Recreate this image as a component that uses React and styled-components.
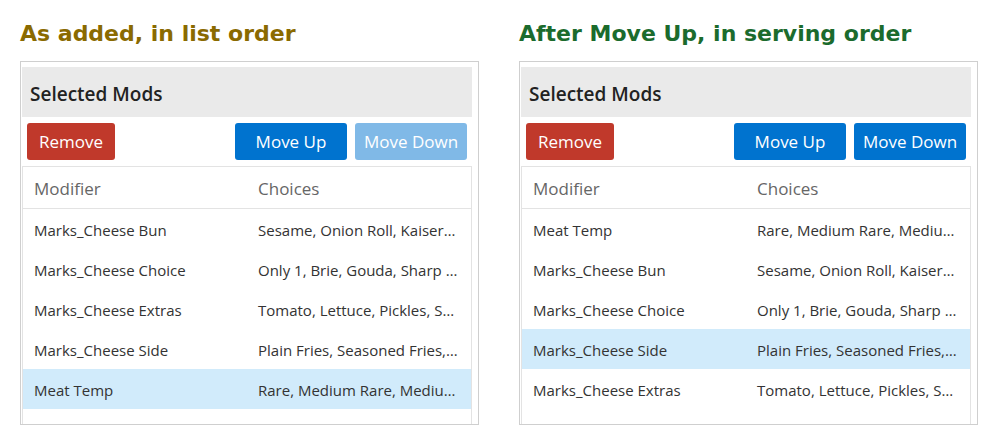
import styled, { createGlobalStyle } from "styled-components";

const GlobalStyle = createGlobalStyle`
  body {
    margin: 0;
    background: #ffffff;
    font-family: "Open Sans", "Noto Sans", sans-serif;
  }
`;

const Page = styled.div`
  display: flex;
  gap: 40px;
  padding: 18px 20px 0 20px;
`;

const Column = styled.section`
  width: 459px;
  display: flex;
  flex-direction: column;
`;

const Title = styled.h2`
  margin: 0 0 10px 0;
  height: 33px;
  font-family: "DejaVu Sans", sans-serif;
  font-weight: bold;
  font-size: 22px;
  line-height: 32px;
  color: ${(p) => p.color};
`;

const Panel = styled.div`
  box-sizing: border-box;
  height: 364px;
  border: 1px solid #cfcfcf;
  padding: 5px 6px 0 1px;
  display: flex;
  flex-direction: column;
  overflow: hidden;
`;

const PanelHeader = styled.div`
  box-sizing: border-box;
  height: 50px;
  background: #eaeaea;
  display: flex;
  align-items: center;
  padding: 4px 0 0 8px;
  font-size: 19px;
  font-weight: 600;
  color: #222;
`;

const Toolbar = styled.div`
  display: flex;
  align-items: center;
  gap: 8px;
  padding: 6px 5px 6px 5px;
`;

const Spacer = styled.div`
  flex: 1;
`;

const Button = styled.button`
  height: 37px;
  width: ${(p) => p.$width}px;
  border: none;
  border-radius: 3px;
  background: ${(p) => (p.disabled ? p.$faded : p.$bg)};
  color: #fff;
  font-family: inherit;
  font-size: 17px;
  padding: 0;
  cursor: ${(p) => (p.disabled ? "default" : "pointer")};
`;

const TableBox = styled.div`
  flex: 1;
  border: 1px solid #e3e3e3;
  border-bottom: none;
`;

const Row = styled.div`
  box-sizing: border-box;
  display: grid;
  grid-template-columns: 1fr 1fr;
  height: 40px;
  padding-top: 1px;
  align-items: center;
  background: ${(p) => (p.$selected ? "#d1ebfb" : "transparent")};
`;

const HeadRow = styled(Row)`
  height: 42px;
  border-bottom: 1px solid #e3e3e3;
`;

const Cell = styled.div`
  padding: 0 12px 0 11px;
  white-space: nowrap;
  overflow: hidden;
  text-overflow: ellipsis;
  font-size: ${(p) => (p.$head ? "17px" : "15px")};
  color: ${(p) => (p.$head ? "#666" : "#333")};
`;

const mods = {
  bun: ["Marks_Cheese Bun", "Sesame, Onion Roll, Kaiser Roll, Pretzel"],
  choice: ["Marks_Cheese Choice", "Only 1, Brie, Gouda, Sharp Cheddar"],
  extras: ["Marks_Cheese Extras", "Tomato, Lettuce, Pickles, Spinach"],
  side: ["Marks_Cheese Side", "Plain Fries, Seasoned Fries, Onion Rings"],
  temp: ["Meat Temp", "Rare, Medium Rare, Medium, Well Done"],
};

function ModsPanel({ title, color, order, selected, downDisabled }) {
  return (
    <Column>
      <Title color={color}>{title}</Title>
      <Panel>
        <PanelHeader>Selected Mods</PanelHeader>
        <Toolbar>
          <Button $width={88} $bg="#c0392b">Remove</Button>
          <Spacer />
          <Button $width={112} $bg="#0073cf">Move Up</Button>
          <Button $width={112} $bg="#0073cf" $faded="#80b9e7" disabled={downDisabled}>
            Move Down
          </Button>
        </Toolbar>
        <TableBox>
          <HeadRow>
            <Cell $head>Modifier</Cell>
            <Cell $head>Choices</Cell>
          </HeadRow>
          {order.map((key) => (
            <Row key={key} $selected={key === selected}>
              <Cell>{mods[key][0]}</Cell>
              <Cell>{mods[key][1]}</Cell>
            </Row>
          ))}
        </TableBox>
      </Panel>
    </Column>
  );
}

export default function App() {
  return (
    <>
      <GlobalStyle />
      <Page>
        <ModsPanel
          title="As added, in list order"
          color="#8a6a00"
          order={["bun", "choice", "extras", "side", "temp"]}
          selected="temp"
          downDisabled
        />
        <ModsPanel
          title="After Move Up, in serving order"
          color="#1b6b2d"
          order={["temp", "bun", "choice", "side", "extras"]}
          selected="side"
        />
      </Page>
    </>
  );
}
